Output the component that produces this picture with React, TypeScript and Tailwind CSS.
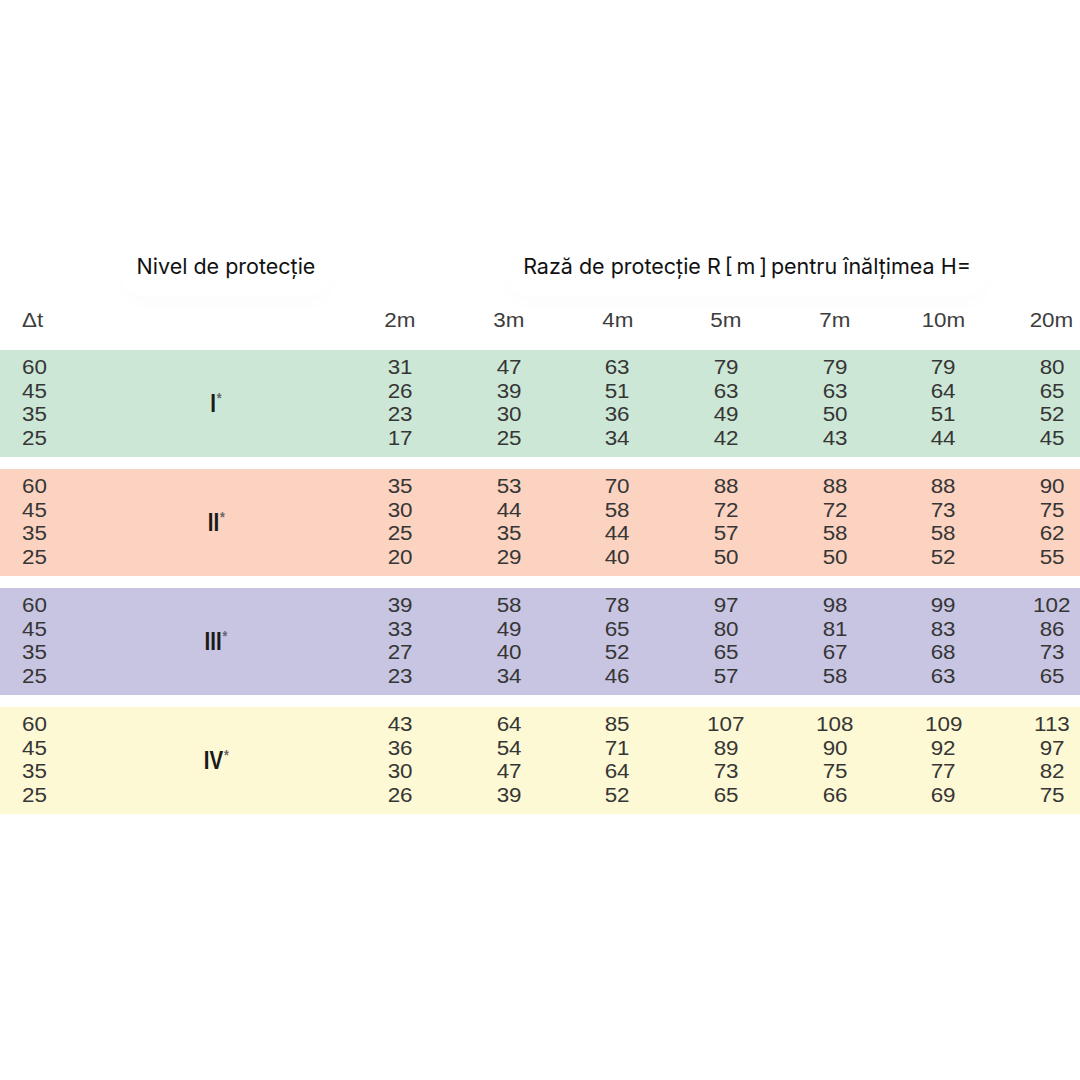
const heights = ["2m", "3m", "4m", "5m", "7m", "10m", "20m"];
const deltas = ["60", "45", "35", "25"];

const levels = [
  {
    name: "I",
    bg: "bg-[#cde7d6]",
    rows: [
      [31, 47, 63, 79, 79, 79, 80],
      [26, 39, 51, 63, 63, 64, 65],
      [23, 30, 36, 49, 50, 51, 52],
      [17, 25, 34, 42, 43, 44, 45],
    ],
  },
  {
    name: "II",
    bg: "bg-[#fcd3c1]",
    rows: [
      [35, 53, 70, 88, 88, 88, 90],
      [30, 44, 58, 72, 72, 73, 75],
      [25, 35, 44, 57, 58, 58, 62],
      [20, 29, 40, 50, 50, 52, 55],
    ],
  },
  {
    name: "III",
    bg: "bg-[#c8c5e2]",
    rows: [
      [39, 58, 78, 97, 98, 99, 102],
      [33, 49, 65, 80, 81, 83, 86],
      [27, 40, 52, 65, 67, 68, 73],
      [23, 34, 46, 57, 58, 63, 65],
    ],
  },
  {
    name: "IV",
    bg: "bg-[#fef9d5]",
    rows: [
      [43, 64, 85, 107, 108, 109, 113],
      [36, 54, 71, 89, 90, 92, 97],
      [30, 47, 64, 73, 75, 77, 82],
      [26, 39, 52, 65, 66, 69, 75],
    ],
  },
];

const grid = "grid grid-cols-[108px_216px_22px_repeat(7,108.6px)]";

export default function App() {
  return (
    <div className="w-[1080px] h-[1080px] bg-white overflow-hidden font-['Liberation_Sans',Arial,sans-serif]">
      {/* title row */}
      <div className="flex pt-[250px] h-[296px] font-['Inter','Roboto',sans-serif] text-[21.5px] text-[#111]">
        <div className="w-[452px] flex justify-center">
          <span className="rounded-full shadow-[0_10px_16px_rgba(0,0,0,0.012)] px-4">
            Nivel de protecție
          </span>
        </div>
        <div className="w-[590px] flex justify-center">
          <span className="rounded-full shadow-[0_10px_16px_rgba(0,0,0,0.012)] px-4">
            Rază de protecție R{"\u2009"}[{"\u2009"}m{"\u2009"}]{"\u2009"}pentru înălțimea H=
          </span>
        </div>
      </div>

      {/* column heads */}
      <div className={`${grid} h-[54px] pt-[9px] text-[20px] text-[#3d3d3d]`}>
        <div className="pl-[22px]">
          <span className="inline-block origin-left scale-x-[1.12]">Δt</span>
        </div>
        <div />
        <div />
        {heights.map((h) => (
          <div key={h} className="text-center">
            <span className="inline-block scale-x-[1.12]">{h}</span>
          </div>
        ))}
      </div>

      {/* bands */}
      <div className="flex flex-col gap-[12px]">
        {levels.map((lvl) => (
          <div
            key={lvl.name}
            className={`${grid} ${lvl.bg} h-[107px] py-[6px] text-[20px] leading-[23.7px] text-[#363636]`}
          >
            <div className="pl-[22px] flex flex-col items-start">
              {deltas.map((d) => (
                <span key={d} className="origin-left scale-x-[1.12]">
                  {d}
                </span>
              ))}
            </div>
            <div className="flex items-center justify-center">
              <span className="inline-flex items-start scale-x-[0.82] font-bold text-[25px] leading-none text-[#1a1a1a]">
                {lvl.name}
                <span className="ml-[1px] -mt-[1px] text-[15px] font-bold leading-none text-[#666]">*</span>
              </span>
            </div>
            <div />
            {heights.map((h, c) => (
              <div key={h} className="flex flex-col items-center">
                {lvl.rows.map((r, i) => (
                  <span key={i} className="scale-x-[1.12]">
                    {r[c]}
                  </span>
                ))}
              </div>
            ))}
          </div>
        ))}
      </div>
    </div>
  );
}
